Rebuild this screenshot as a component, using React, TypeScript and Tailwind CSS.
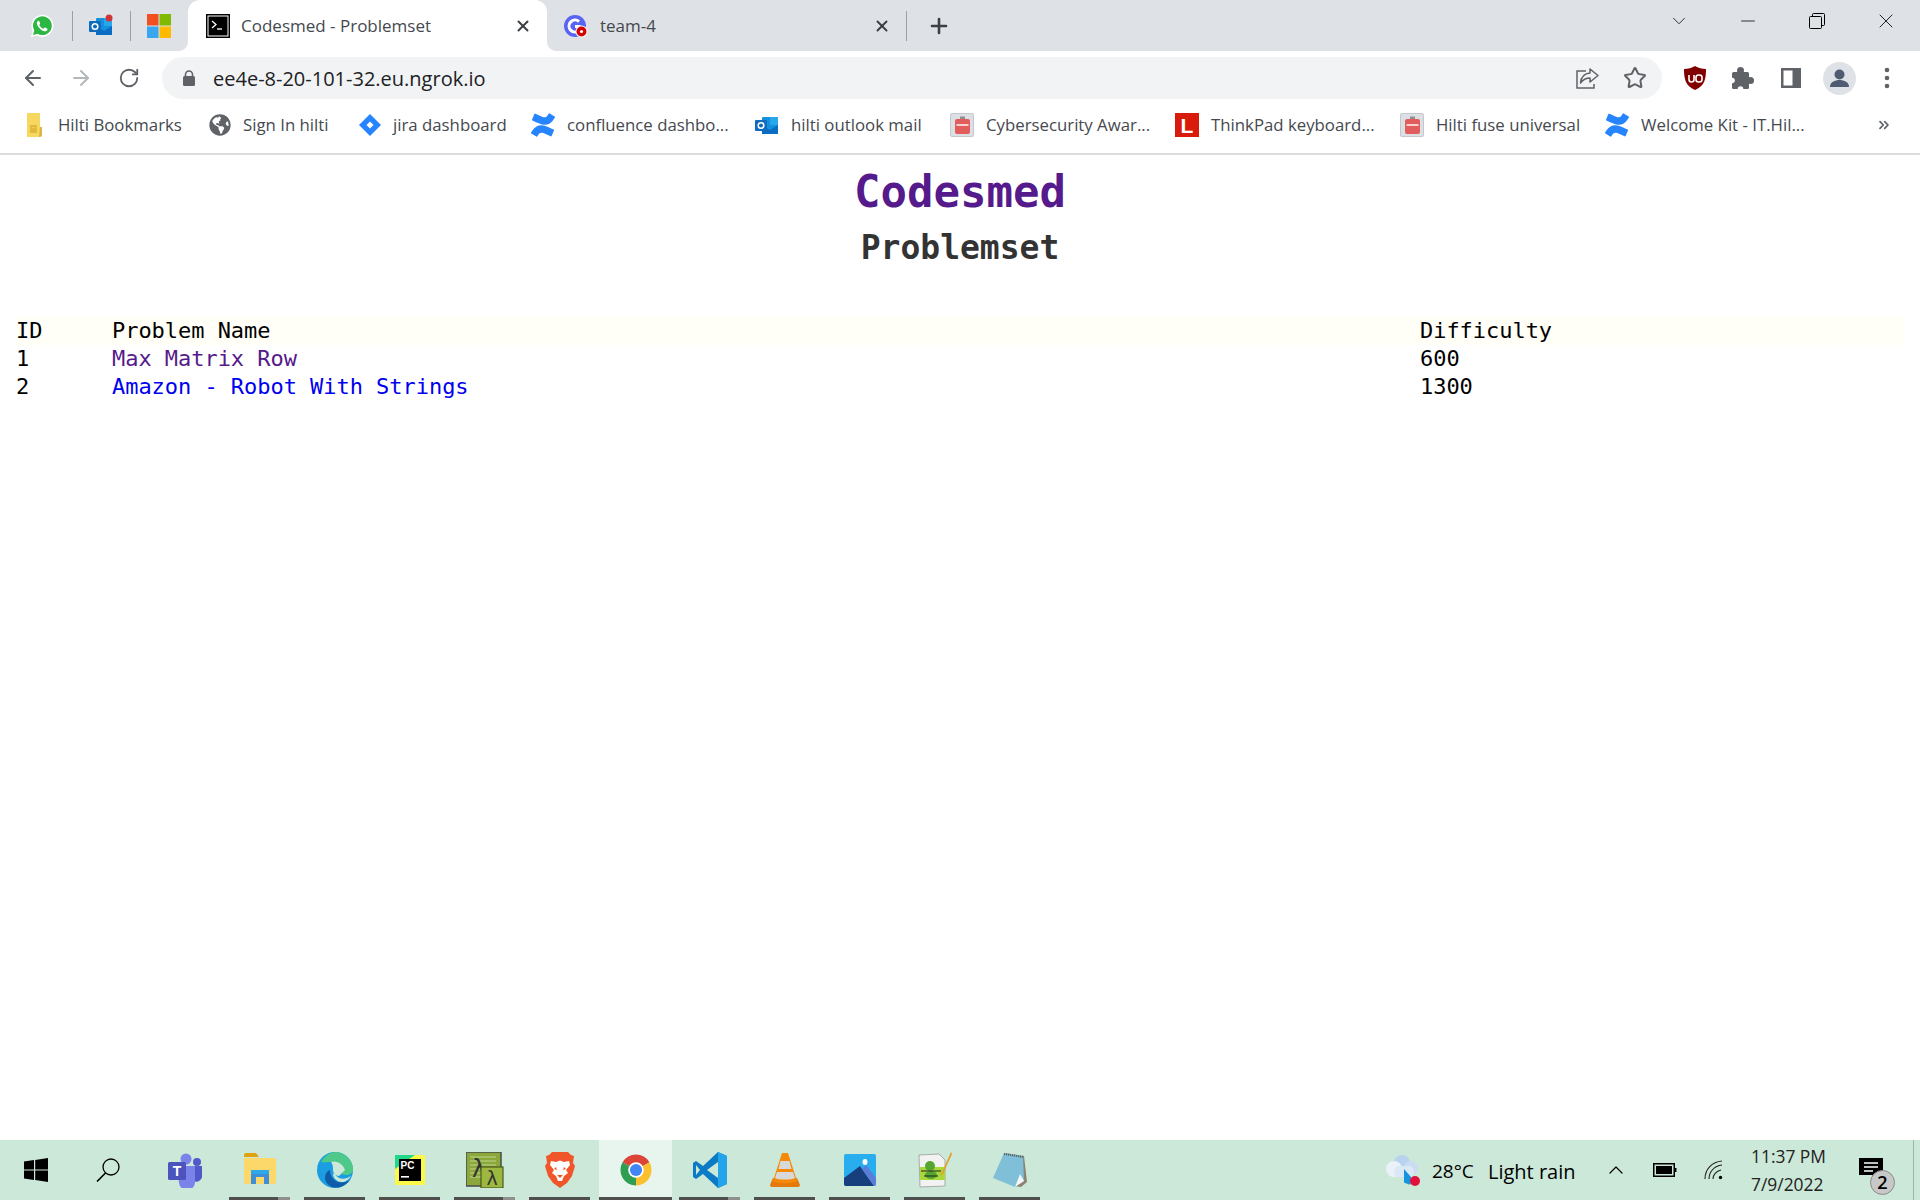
import { ArrowLeft, ArrowRight, RotateCw, Star, X, Plus, ChevronDown, ChevronUp, Minus, ChevronsRight } from "lucide-react";
import { FaGlobeAmericas } from "react-icons/fa";
import { SiConfluence } from "react-icons/si";

function WhatsApp() {
  return (
    <svg viewBox="0 0 24 24" className="w-6 h-6">
      <path d="M1 23l1.7-6A11 11 0 1 1 7 21.4z" fill="#fff" />
      <path d="M3 21l1.3-4.5A9.4 9.4 0 1 1 7.600 19.800z" fill="#2bb741" />
      <path d="M8.500 6.500c-1 .4-1.900 1.700-1.600 3.300.5 2.800 4.300 7 7.600 7.500 1.500.2 2.700-.8 3-1.800.1-.4-.1-.7-.4-.9l-2-1c-.4-.2-.7 0-.9.300l-.7.900c-1.700-.6-3.400-2.200-4.200-3.900l.7-.8c.2-.3.300-.6.100-.9l-.9-2c-.2-.3-.5-.4-.7-.2z" fill="#fff" />
    </svg>
  );
}

function Outlook({ dot = false }: { dot?: boolean }) {
  return (
    <svg viewBox="0 0 24 24" className="w-6 h-6">
      <rect x="7" y="4" width="16" height="17" rx="1" fill="#1490df" />
      <rect x="15" y="4" width="8" height="8" fill="#28a8ea" />
      <path d="M7 12l8 5 8-5v9H7z" fill="#0a6cc2" />
      <rect x="0" y="7" width="12" height="11" rx="1" fill="#0f6cbd" />
      <circle cx="6" cy="12.500" r="2.800" fill="none" stroke="#fff" strokeWidth="1.500" />
      {dot && <circle cx="20" cy="4" r="3.500" fill="#d13438" />}
    </svg>
  );
}

function MsLogo() {
  return (
    <svg viewBox="0 0 24 24" className="w-6 h-6">
      <rect x="0" y="0" width="11.500" height="11.500" fill="#f25022" />
      <rect x="12.500" y="0" width="11.500" height="11.500" fill="#7fba00" />
      <rect x="0" y="12.500" width="11.500" height="11.500" fill="#39a7f0" />
      <rect x="12.500" y="12.500" width="11.500" height="11.500" fill="#ffb900" />
    </svg>
  );
}

function TerminalIcon() {
  return (
    <svg viewBox="0 0 24 24" className="w-6 h-6">
      <rect x="0" y="0" width="24" height="24" fill="#000" />
      <rect x="2" y="2" width="20" height="20" fill="none" stroke="#fff" strokeWidth="1" />
      <path d="M6 7l4 3.500-4 3.500" fill="none" stroke="#fff" strokeWidth="1.300" />
      <path d="M11 15h5" stroke="#fff" strokeWidth="1.300" />
    </svg>
  );
}

function TeamIcon() {
  return (
    <svg viewBox="0 0 24 24" className="w-6 h-6">
      <circle cx="11" cy="12" r="11" fill="#5865f2" />
      <path d="M15 7.500a6 6 0 1 0 0 9v-4h-4" fill="none" stroke="#fff" strokeWidth="3" />
      <circle cx="17.500" cy="17.500" r="6" fill="#fff" />
      <circle cx="17.500" cy="17.500" r="5" fill="#d50000" />
      <circle cx="17.500" cy="17.500" r="1.600" fill="#fff" />
    </svg>
  );
}

function ShareIcon() {
  return (
    <svg viewBox="0 0 24 24" className="w-6 h-6" fill="none" stroke="#5f6368" strokeWidth="1.500">
      <path d="M11 5H2v17h17v-4" />
      <path d="M15 3l8 6.500-8 6.500v-4c-4 0-7 1.500-9.500 5 .5-5.500 4-9.500 9.500-10z" strokeLinejoin="round" />
    </svg>
  );
}

function UBlock() {
  return (
    <svg viewBox="0 0 24 24" className="w-6 h-6">
      <path d="M12 0c3 2 7 3 11 3 0 9-1 17-11 21C2 20 1 12 1 3c4 0 8-1 11-3z" fill="#800000" />
      <path d="M6 9v4.500a2.500 2.500 0 0 0 5 0V9" fill="none" stroke="#fff" strokeWidth="1.600" />
      <rect x="13" y="9" width="6" height="7" rx="2.500" fill="none" stroke="#fff" strokeWidth="1.600" />
    </svg>
  );
}

function PuzzleIcon() {
  return (
    <svg viewBox="0 0 22 22" className="w-[22px] h-[22px]">
      <rect x="0" y="5" width="17" height="17" rx="1.500" fill="#5f6368" />
      <circle cx="8.500" cy="3.500" r="3.500" fill="#5f6368" />
      <circle cx="18.500" cy="13.500" r="3.500" fill="#5f6368" />
      <circle cx="0" cy="13.500" r="2.800" fill="#fff" />
      <circle cx="8.500" cy="22" r="2.800" fill="#fff" />
    </svg>
  );
}

function SidePanelIcon() {
  return (
    <svg viewBox="0 0 22 22" className="w-[22px] h-[22px]">
      <rect x="1" y="1" width="20" height="20" fill="#5f6368" />
      <rect x="3.500" y="3.500" width="9" height="15" fill="#fff" />
    </svg>
  );
}

function Avatar() {
  return (
    <svg viewBox="0 0 33 33" className="w-[33px] h-[33px]">
      <circle cx="16.500" cy="16.500" r="16.500" fill="#dee1e6" />
      <circle cx="16.500" cy="12.500" r="5" fill="#4f5b70" />
      <path d="M7 25c0-5 5-7 9.500-7s9.500 2 9.500 7z" fill="#4f5b70" />
    </svg>
  );
}

function Dots() {
  return (
    <svg viewBox="0 0 6 22" className="w-[6px] h-[22px]">
      <circle cx="3" cy="3" r="2.300" fill="#5f6368" />
      <circle cx="3" cy="11" r="2.300" fill="#5f6368" />
      <circle cx="3" cy="19" r="2.300" fill="#5f6368" />
    </svg>
  );
}

function HiltiDoc() {
  return (
    <svg viewBox="0 0 24 24" className="w-6 h-6">
      <path d="M3 0h13v24H3z" fill="#f6d860" />
      <path d="M16 14h2v8a2 2 0 0 1-2 2h-1z" fill="#d8b544" />
      <rect x="6" y="12" width="7" height="8" fill="#e2b93b" />
      <rect x="8" y="14" width="1" height="1" fill="#f6d860" />
      <rect x="10.500" y="14" width="1" height="1" fill="#f6d860" />
    </svg>
  );
}

function JiraIcon() {
  return (
    <svg viewBox="0 0 24 24" className="w-6 h-6">
      <path d="M12 1l11 11-11 11L1 12z" fill="#2684ff" />
      <path d="M12 8.500l3.500 3.500-3.500 3.500L8.500 12z" fill="#fff" />
    </svg>
  );
}

function BadgeIcon() {
  return (
    <svg viewBox="0 0 24 24" className="w-6 h-6">
      <rect x="0" y="0" width="24" height="24" rx="2" fill="#dcdfe3" />
      <rect x="0.500" y="0.500" width="23" height="23" rx="2" fill="none" stroke="#c4c7cb" />
      <rect x="5" y="6" width="15" height="15" rx="2" fill="#e25c5c" />
      <rect x="10" y="3.500" width="5" height="2.500" fill="#8f8f8f" />
      <rect x="6.500" y="11" width="12" height="2" fill="#f7d0d0" />
    </svg>
  );
}

function LenovoL() {
  return (
    <svg viewBox="0 0 24 24" className="w-6 h-6">
      <rect x="0" y="0" width="24" height="24" fill="#d91b0b" />
      <text x="12" y="20" textAnchor="middle" fontFamily="Liberation Sans, sans-serif" fontWeight="700" fontSize="21" fill="#fff">L</text>
    </svg>
  );
}

function WindowsLogo() {
  return (
    <svg viewBox="0 0 24 24" className="w-6 h-6">
      <path d="M0 3.500l10-1.400v9.300H0zM11.200 2L24 0v11.400H11.200zM0 12.600h10V22L0 20.500zM11.200 12.600H24V24l-12.800-2z" fill="#000" />
    </svg>
  );
}

function SearchIcon() {
  return (
    <svg viewBox="0 0 24 24" className="w-6 h-6" fill="none" stroke="#000" strokeWidth="1.300">
      <circle cx="15" cy="9" r="8" />
      <path d="M9.500 15L1 23.500" strokeWidth="1.600" />
    </svg>
  );
}

function TeamsIcon() {
  return (
    <svg viewBox="0 0 36 36" className="w-9 h-9">
      <circle cx="19" cy="7" r="5.500" fill="#7b83eb" />
      <circle cx="30" cy="10" r="4" fill="#5059c9" />
      <path d="M25 14h10v11a6 6 0 0 1-10 3z" fill="#5059c9" />
      <path d="M10 14h18v15a8 8 0 0 1-16 2z" fill="#7b83eb" />
      <rect x="1" y="10" width="18" height="18" rx="1.500" fill="#4b53bc" />
      <text x="10" y="24" textAnchor="middle" fontFamily="Liberation Sans, sans-serif" fontWeight="700" fontSize="14" fill="#fff">T</text>
    </svg>
  );
}

function ExplorerIcon() {
  return (
    <svg viewBox="0 0 32 36" className="w-8 h-9">
      <path d="M0 3a2 2 0 0 1 2-2h10l3 4H0z" fill="#e0a30f" />
      <path d="M0 6h30a2 2 0 0 1 2 2v22a2 2 0 0 1-2 2H2a2 2 0 0 1-2-2z" fill="#fcd86a" />
      <path d="M7 18h18v14h-5v-7h-8v7H7z" fill="#3f8fd8" />
      <rect x="7" y="18" width="18" height="4" fill="#2fa8ea" />
    </svg>
  );
}

function EdgeIcon() {
  return (
    <svg viewBox="0 0 36 36" className="w-9 h-9">
      <circle cx="18" cy="18" r="18" fill="#1b9de2" />
      <path d="M4 10C8 3 14 0 18 0c10 0 18 8 18 17 0 4-3 6-7 6-3 0-5-1-5-3 0-6-5-10-10-10-4 0-7 1-10 0z" fill="#4fc98a" />
      <path d="M14 10c6-2 12 2 14 8l-6 6c-3 0-6-3-6-6s0-5-2-8z" fill="#cce8d8" />
      <path d="M13 18c0 8 6 14 15 12 3-.7 5-2 6-4-4 8-14 12-21 8-3-2-5-5-5-8 0-4 2-7 5-8z" fill="#0f5ba8" />
      <path d="M18 22c2 4 7 6 12 4 2-.7 3-1.500 4-2.500-1 2.500-3 4.500-6 6-6 2-12-2-12-8z" fill="#cce8d8" />
    </svg>
  );
}

function PyCharmIcon() {
  return (
    <svg viewBox="0 0 30 30" className="w-[30px] h-[30px]">
      <rect x="0" y="0" width="30" height="30" fill="#fcf84a" />
      <path d="M0 0h20L0 14z" fill="#21d789" />
      <rect x="4" y="4" width="22" height="22" fill="#000" />
      <text x="5.500" y="14" fontFamily="Liberation Sans, sans-serif" fontWeight="700" fontSize="10" fill="#fff">PC</text>
      <rect x="6" y="21" width="8" height="1.600" fill="#fff" />
    </svg>
  );
}

function LambdaIcon() {
  return (
    <svg viewBox="0 0 38 36" className="w-[38px] h-9">
      <rect x="0" y="0" width="35" height="34" fill="#8aa83c" stroke="#4b4b4b" strokeWidth="1.500" />
      <path d="M4 5h26M4 9h26M4 13h26M4 17h12M4 21h12M4 25h12" stroke="#c4d68a" strokeWidth="1" />
      <text x="13" y="25" textAnchor="middle" fontFamily="DejaVu Sans, sans-serif" fontSize="24" fill="#333">λ</text>
      <rect x="15" y="15" width="22" height="21" fill="#9cb83f" stroke="#4b5a1c" strokeWidth="1.200" />
      <text x="26" y="33" textAnchor="middle" fontFamily="DejaVu Sans, sans-serif" fontSize="19" fill="#333">λ</text>
    </svg>
  );
}

function BraveIcon() {
  return (
    <svg viewBox="0 0 30 36" className="w-[30px] h-9">
      <path d="M7 0h16l3 3 3 1-1 7 2 3-3 10-5 7-7 5-7-5-5-7L0 14l2-3-1-7 3-1z" fill="#f1562b" />
      <path d="M6 9l5 1 4-1.500L19 10l5-1 1 4-4 5 2 3-4 3-2 5h-4l-2-5-4-3 2-3-4-5z" fill="#fff" />
      <path d="M11 15l-2 2 3 1zM19 15l2 2-3 1zM12 23h6l-3 3z" fill="#f1562b" />
    </svg>
  );
}

function ChromeIcon() {
  return (
    <svg viewBox="0 0 24 24" className="w-[34px] h-[34px]">
      <path d="M12 12L2.500 6.500A11 11 0 0 1 21.500 6.500Z" fill="#db4437" />
      <path d="M12 12L21.500 6.500A11 11 0 0 1 12 23Z" fill="#fbc02d" />
      <path d="M12 12L12 23A11 11 0 0 1 2.500 6.500Z" fill="#2f9e52" />
      <circle cx="12" cy="12" r="5.500" fill="#fff" />
      <circle cx="12" cy="12" r="4.300" fill="#4285f4" />
    </svg>
  );
}

function VsCodeIcon() {
  return (
    <svg viewBox="0 0 36 36" className="w-9 h-9">
      <path d="M26 0l9 4v28l-9 4-15-14-7 5-3-2V11l3-2 7 5z" fill="#0a7bc4" />
      <path d="M26 0l9 4v28l-9 4z" fill="#22a5ea" />
      <path d="M26 10L15 18l11 8z" fill="#cce8d8" />
      <path d="M4 13l4 5-4 5z" fill="#cce8d8" />
    </svg>
  );
}

function VlcIcon() {
  return (
    <svg viewBox="0 0 30 36" className="w-[30px] h-9">
      <path d="M3 26h24l3 7a2 2 0 0 1-2 2H2a2 2 0 0 1-2-2z" fill="#e47a0b" />
      <path d="M12 1h6l9 28c-4 3-20 3-24 0z" fill="#f58a0a" />
      <path d="M10.500 9h9l2 8h-13z" fill="#d8d8d8" />
      <path d="M7 20h16l2 6c-4 2-16 2-20 0z" fill="#d8d8d8" />
    </svg>
  );
}

function PhotosIcon() {
  return (
    <svg viewBox="0 0 32 32" className="w-8 h-8">
      <rect x="0" y="0" width="32" height="32" rx="2" fill="#28aeee" />
      <ellipse cx="21" cy="8" rx="2.500" ry="3" fill="#fff" />
      <path d="M0 30a2 2 0 0 0 2 2h28l-14-20L0 24z" fill="#173f7e" />
      <path d="M18 15l4-4 10 13v6a2 2 0 0 1-2 2z" fill="#5b7dd8" />
    </svg>
  );
}

function NotepadPlusIcon() {
  return (
    <svg viewBox="0 0 34 36" className="w-[34px] h-9">
      <path d="M1 3l20-1 6 6v26L2 35z" fill="#f2f2f2" stroke="#9a9a9a" strokeWidth="0.800" />
      <path d="M2 15h25v13H2z" fill="#a8d83a" />
      <ellipse cx="12" cy="14" rx="5" ry="5" fill="#55a630" />
      <ellipse cx="13" cy="23" rx="6" ry="4" fill="#55a630" />
      <path d="M3 19h20M6 24h14" stroke="#222" strokeWidth="1.200" />
      <path d="M33 0l-9 20-2 4 3-2 9-20z" fill="#e2a12a" />
    </svg>
  );
}

function NotepadIcon() {
  return (
    <svg viewBox="0 0 34 36" className="w-[34px] h-9">
      <path d="M12 1l19 3 3 26-6 5-7-1z" fill="#8c8270" />
      <path d="M11 1l19 3 1 25-9 6L0 26z" fill="#7fc0d8" />
      <path d="M31 29l-9 6 5-13z" fill="#f6f6f6" />
      <path d="M11 2l19 3" stroke="#555" strokeWidth="2" strokeDasharray="1 1" />
    </svg>
  );
}

function WeatherIcon() {
  return (
    <svg viewBox="0 0 34 32" className="w-[34px] h-8">
      <circle cx="16" cy="9" r="8" fill="#b9d2ef" />
      <circle cx="25" cy="14" r="7" fill="#c8dcf2" />
      <circle cx="8" cy="15" r="8" fill="#eaf1f9" />
      <rect x="8" y="12" width="20" height="11" rx="5" fill="#dbe8f6" />
      <path d="M18 15l7 8v6a2 2 0 0 1-3 1l-3-1c-1-.3-1-1-1-2z" fill="#1594e0" />
      <circle cx="29" cy="27" r="5" fill="#e3103c" />
    </svg>
  );
}

function BatteryIcon() {
  return (
    <svg viewBox="0 0 24 14" className="w-6 h-[14px]">
      <rect x="0.750" y="0.750" width="20.500" height="12.500" fill="none" stroke="#000" strokeWidth="1.500" />
      <rect x="3" y="3" width="16" height="8" fill="#000" />
      <rect x="22" y="5" width="1.500" height="4" fill="#000" />
    </svg>
  );
}

function WifiIcon() {
  return (
    <svg viewBox="0 0 20 20" className="w-5 h-5" fill="none" stroke="#222" strokeWidth="1.100">
      <path d="M1 19C1 9 8 2 18 1" />
      <path d="M5 19C5 12 10 6 18 5" />
      <path d="M9 19c0-4 3-8 8-9" />
      <circle cx="16.500" cy="17.500" r="1.700" fill="#000" stroke="none" />
    </svg>
  );
}

function NotifyIcon() {
  return (
    <div className="relative w-[24px] h-[24px]">
      <svg viewBox="0 0 24 24" className="w-6 h-6">
        <path d="M0 0h24v17h-5l-1 5-5-5H0z" fill="#000" />
        <path d="M5 5h14M5 9h14M5 13h9" stroke="#fff" strokeWidth="1.300" />
      </svg>
      <span className="absolute left-[11px] top-[12px] w-[25px] h-[25px] rounded-full bg-[#c8c8c8] border border-[#8a8a8a] flex items-center justify-center text-[18px] font-['Open_Sans',sans-serif] font-semibold text-black">2</span>
    </div>
  );
}

const BOOKMARKS = [
  { label: "Hilti Bookmarks", icon: <HiltiDoc />, box: "w-[184px]", gap: "ml-[10px]" },
  { label: "Sign In hilti", icon: <FaGlobeAmericas className="w-[22px] h-[22px] text-[#5f6368]" />, box: "w-[150px]", gap: "ml-[11px]" },
  { label: "jira dashboard", icon: <JiraIcon />, box: "w-[173px]", gap: "ml-[11px]" },
  { label: "confluence dashbo...", icon: <SiConfluence className="w-6 h-6 text-[#2684ff]" />, box: "w-[224px]", gap: "ml-[12px]" },
  { label: "hilti outlook mail", icon: <Outlook />, box: "w-[195px]", gap: "ml-[12px]" },
  { label: "Cybersecurity Awar...", icon: <BadgeIcon />, box: "w-[225px]", gap: "ml-[12px]" },
  { label: "ThinkPad keyboard...", icon: <LenovoL />, box: "w-[225px]", gap: "ml-[12px]" },
  { label: "Hilti fuse universal", icon: <BadgeIcon />, box: "w-[205px]", gap: "ml-[12px]" },
  { label: "Welcome Kit - IT.Hil...", icon: <SiConfluence className="w-6 h-6 text-[#2684ff]" />, box: "w-[271px]", gap: "ml-[12px]" },
];

const TASKBAR = [
  { icon: <TeamsIcon />, bar: "none" },
  { icon: <ExplorerIcon />, bar: "split" },
  { icon: <EdgeIcon />, bar: "full" },
  { icon: <PyCharmIcon />, bar: "full" },
  { icon: <LambdaIcon />, bar: "split" },
  { icon: <BraveIcon />, bar: "full" },
  { icon: <ChromeIcon />, bar: "active" },
  { icon: <VsCodeIcon />, bar: "split" },
  { icon: <VlcIcon />, bar: "full" },
  { icon: <PhotosIcon />, bar: "full" },
  { icon: <NotepadPlusIcon />, bar: "full" },
  { icon: <NotepadIcon />, bar: "full" },
];

const PROBLEMS = [
  { id: "1", name: "Max Matrix Row", difficulty: "600", color: "text-[#551a8b]" },
  { id: "2", name: "Amazon - Robot With Strings", difficulty: "1300", color: "text-[#0000ee]" },
];

export default function App() {
  return (
    <div className="w-[1920px] h-[1200px] flex flex-col overflow-hidden bg-white font-['Open_Sans',sans-serif]">
      {/* tab strip */}
      <div className="h-[51px] shrink-0 bg-[#dee1e6] flex items-center pl-[30px]">
        <WhatsApp />
        <div className="ml-[18px] w-px h-[30px] bg-[#9aa0a6]" />
        <div className="ml-[16px]"><Outlook dot /></div>
        <div className="ml-[17px] w-px h-[30px] bg-[#9aa0a6]" />
        <div className="ml-[16px]"><MsLogo /></div>
        <div className="relative ml-[17px] w-[359px] h-[51px] bg-white rounded-t-[12px] flex items-center pl-[18px] pr-[15px]">
          <svg viewBox="0 0 9 9" className="absolute left-[-9px] bottom-0 w-[9px] h-[9px]"><path d="M9 0v9H0a9 9 0 0 0 9-9z" fill="#fff" /></svg>
          <svg viewBox="0 0 9 9" className="absolute right-[-9px] bottom-0 w-[9px] h-[9px]"><path d="M0 0v9h9a9 9 0 0 1-9-9z" fill="#fff" /></svg>
          <TerminalIcon />
          <span className="ml-[11px] text-[17px] text-[#45494e] whitespace-nowrap">Codesmed - Problemset</span>
          <X className="ml-auto w-[18px] h-[18px] text-[#3c4043]" strokeWidth={2.6} />
        </div>
        <div className="w-[359px] h-[51px] flex items-center pl-[17px] pr-[15px]">
          <TeamIcon />
          <span className="ml-[12px] text-[17px] text-[#45494e]">team-4</span>
          <X className="ml-auto w-[18px] h-[18px] text-[#3c4043]" strokeWidth={2.6} />
        </div>
        <div className="w-px h-[30px] bg-[#9aa0a6]" />
        <Plus className="ml-[20px] w-6 h-6 text-[#3c4043]" strokeWidth={2.6} />
        <div className="ml-auto self-start flex h-[42px] items-center text-[#222]">
          <div className="w-[68px] flex justify-center"><ChevronDown className="w-[22px] h-[22px]" strokeWidth={1} /></div>
          <div className="w-[69px] flex justify-center"><Minus className="w-[22px] h-[22px]" strokeWidth={1} /></div>
          <div className="w-[70px] flex justify-center">
            <svg viewBox="0 0 16 16" className="w-4 h-4" fill="none" stroke="#000" strokeWidth="1">
              <rect x="0.500" y="3.500" width="12" height="12" rx="1" />
              <path d="M3.500 3.500V1.500a1 1 0 0 1 1-1h10a1 1 0 0 1 1 1v10a1 1 0 0 1-1 1h-2" />
            </svg>
          </div>
          <div className="w-[68px] flex justify-center"><X className="w-[24px] h-[24px]" strokeWidth={1} /></div>
        </div>
      </div>

      {/* toolbar */}
      <div className="h-[54px] shrink-0 flex items-center pl-[9px]">
        <div className="w-12 flex justify-center"><ArrowLeft className="w-6 h-6 text-[#5f6368]" strokeWidth={2} /></div>
        <div className="w-12 flex justify-center"><ArrowRight className="w-6 h-6 text-[#b5b8bb]" strokeWidth={2} /></div>
        <div className="w-12 flex justify-center"><RotateCw className="w-[22px] h-[22px] text-[#5f6368]" strokeWidth={2} /></div>
        <div className="ml-[9px] w-[1500px] h-[42px] rounded-full bg-[#f1f3f4] flex items-center pl-[20px] pr-[15px]">
          <svg viewBox="0 0 14 18" className="w-[14px] h-[18px]">
            <path d="M3.500 8V5.500a3.500 3.500 0 0 1 7 0V8" fill="none" stroke="#5f6368" strokeWidth="1.600" />
            <rect x="1" y="7" width="12" height="10" rx="1.500" fill="#5f6368" />
          </svg>
          <span className="ml-[17px] mt-[1px] text-[20px] text-[#202124]">ee4e-8-20-101-32.eu.ngrok.io</span>
          <div className="ml-auto flex items-center gap-6">
            <ShareIcon />
            <Star className="w-6 h-6 text-[#5f6368]" strokeWidth={2} />
          </div>
        </div>
        <div className="ml-[9px] w-12 flex justify-center"><UBlock /></div>
        <div className="w-12 flex justify-center"><PuzzleIcon /></div>
        <div className="w-12 flex justify-center"><SidePanelIcon /></div>
        <div className="w-12 flex justify-center"><Avatar /></div>
        <div className="w-12 flex justify-center"><Dots /></div>
      </div>

      {/* bookmarks bar */}
      <div className="h-[50px] shrink-0 flex items-center pl-[24px] pb-[8px] border-b-2 border-[#dcdcdc]">
        {BOOKMARKS.map((b) => (
          <div key={b.label} className={`${b.box} flex items-center`}>
            <div className="w-6 h-6 flex items-center justify-center">{b.icon}</div>
            <span className={`${b.gap} text-[16.8px] text-[#45494e] whitespace-nowrap`}>{b.label}</span>
          </div>
        ))}
        <ChevronsRight className="w-4 h-4 text-[#5f6368]" strokeWidth={2.6} />
      </div>

      {/* page */}
      <div className="flex-1 min-h-0 font-['DejaVu_Sans_Mono',monospace] text-black">
        <h1 className="mt-[11px] h-[52px] leading-[52px] text-center text-[44px] font-bold text-[#551a8b]">Codesmed</h1>
        <h2 className="mt-[8px] h-[44px] leading-[44px] text-center text-[33px] font-bold text-[#333]">Problemset</h2>
        <div className="mt-[47px] mx-4 tracking-[-0.04px]">
          <div className="h-[28px] leading-[28px] grid grid-cols-[96px_1308px_1fr] items-center bg-[#fffff8] text-[22px]">
            <span>ID</span>
            <span>Problem Name</span>
            <span>Difficulty</span>
          </div>
          {PROBLEMS.map((p) => (
            <div key={p.id} className="h-[28px] leading-[28px] grid grid-cols-[96px_1308px_1fr] items-center text-[22px]">
              <span>{p.id}</span>
              <span className={p.color}>{p.name}</span>
              <span>{p.difficulty}</span>
            </div>
          ))}
        </div>
      </div>

      {/* taskbar */}
      <div className="h-[60px] shrink-0 bg-[#cce8d8] flex items-stretch text-black">
        <div className="w-[72px] flex items-center justify-center"><WindowsLogo /></div>
        <div className="w-[72px] flex items-center justify-center"><SearchIcon /></div>
        <div className="w-[3px]" />
        {TASKBAR.map((t, i) => (
          <div key={i} className={t.bar === "active" ? "relative ml-[2px] w-[73px] flex items-center justify-center bg-[#e8f5ee]" : "relative w-[75px] flex items-center justify-center"}>
            {t.icon}
            {t.bar === "full" && <div className="absolute bottom-0 left-[7px] right-[7px] h-[3px] bg-[#4f4f4f]" />}
            {t.bar === "active" && <div className="absolute bottom-0 left-0 right-0 h-[3px] bg-[#4f4f4f]" />}
            {t.bar === "split" && (
              <div className="absolute bottom-0 left-[7px] right-[7px] h-[3px] bg-[#8f8f8f]">
                <div className="w-[49px] h-[3px] bg-[#4f4f4f]" />
              </div>
            )}
          </div>
        ))}
        <div className="ml-[339px] flex items-center"><WeatherIcon /></div>
        <div className="ml-[12px] pt-[3px] w-[56px] flex items-center text-[19px]">28°C</div>
        <div className="w-[116px] pt-[3px] flex items-center text-[20px]">Light rain</div>
        <div className="w-[24px] flex items-center justify-center"><ChevronUp className="w-7 h-7" strokeWidth={1.2} /></div>
        <div className="ml-[25px] w-[24px] flex items-center"><BatteryIcon /></div>
        <div className="ml-[27px] w-[20px] flex items-center"><WifiIcon /></div>
        <div className="ml-[27px] w-[82px] flex flex-col justify-center text-[17.4px] leading-[28px] text-[#222]">
          <span>11:37 PM</span>
          <span>7/9/2022</span>
        </div>
        <div className="ml-[26px] flex items-center"><NotifyIcon /></div>
        <div className="ml-[30px] w-px bg-[#9fb5a8]" />
      </div>
    </div>
  );
}
